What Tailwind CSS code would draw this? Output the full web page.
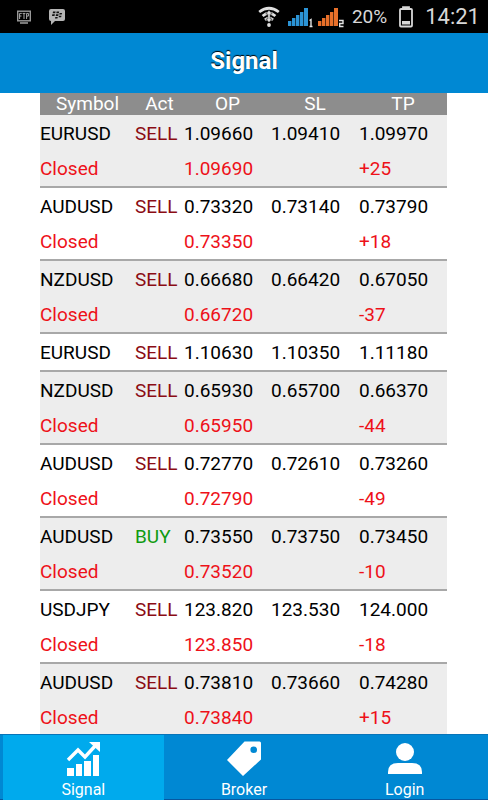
<!DOCTYPE html>
<html lang="en">
<head>
<meta charset="utf-8">
<meta name="viewport" content="width=device-width, initial-scale=1">
<title>Signal</title>
<script src="https://cdn.jsdelivr.net/npm/@tailwindcss/browser@4"></script>
</head>
<body class="flex h-screen flex-col overflow-hidden bg-white font-['Roboto',sans-serif] text-black">

<!-- Device status bar -->
<div class="flex h-[33px] shrink-0 items-center bg-black pr-2 pl-4 text-[#d8d8d8]">
  <svg class="h-[18px] w-4" viewBox="0 0 16 18" aria-hidden="true">
    <rect x="1.7" y="3.2" width="12.6" height="9.6" fill="none" stroke="#999" stroke-width="1.4"/>
    <path d="M4 15h8" stroke="#999" stroke-width="1.6"/>
    <path d="M3.6 11V5.4h2.2M3.6 8h1.9M6.6 5.4h2.8M8 5.4V11M10.6 11V5.4h1.8v2.7h-1.8" fill="none" stroke="#aaa" stroke-width="1"/>
  </svg>
  <svg class="ml-4 h-[18px] w-[18px]" viewBox="0 0 18 18" aria-hidden="true">
    <path d="M3 1h12q2 0 2 2v8q0 2-2 2H7l-4 4v-4q-2 0-2-2V3q0-2 2-2z" fill="#b5b5b5"/>
    <path d="M5 3.500h2.600l-.4 1.700H4.700zM8.600 3.500h2.600l-.4 1.700H8.300zM4.300 6.300h2.600l-.4 1.700H4zM8 6.300h2.600l-.4 1.700H7.700zM11.600 5h2.500l-.4 1.600h-2.500zM11 7.700h2.500l-.4 1.600h-2.500zM7.300 9h2.500l-.4 1.600H7z" fill="#111"/>
  </svg>
  <div class="ml-auto flex items-center">
    <svg class="h-[22px] w-[22px]" viewBox="0 0 22 22" aria-hidden="true">
      <g fill="none" stroke="#e0e0e0" stroke-width="2.8">
        <path d="M1.200 6Q11-1.500 20.800 6"/>
        <path d="M4.600 10Q11 4.500 17.400 10"/>
        <path d="M7 13.800Q11 10.500 15 13.800"/>
      </g>
      <path d="M11 4l3.200 4h-2v5h2L11 16.500 7.800 13h2V8h-2z" fill="#e0e0e0" stroke="#000" stroke-width=".5"/>
      <circle cx="11" cy="19" r="1.900" fill="#e0e0e0"/>
    </svg>
    <svg class="ml-2 h-[22px] w-[26px]" viewBox="0 0 26 22" aria-hidden="true">
      <path d="M0 15h3.400v5H0zM4 12h3.400v8H4zM8 9h3.400v11H8zM12 6h3.400v14H12zM16 2h4v18h-4z" fill="#2b94d6"/>
      <path d="M21.500 14.500l1.500-1v6.500M21.500 20.500h3" fill="none" stroke="#e4e4e4" stroke-width="1.400"/>
    </svg>
    <svg class="ml-1 h-[22px] w-[26px]" viewBox="0 0 26 22" aria-hidden="true">
      <path d="M0 15h3.400v5H0zM4 12h3.400v8H4zM8 9h3.400v11H8zM12 6h3.400v14H12zM16 2h4v18h-4z" fill="#e8702a"/>
      <path d="M21 14.500h4v3h-3.300v3H25.500" fill="none" stroke="#e4e4e4" stroke-width="1.400"/>
    </svg>
    <span class="ml-2 text-[19px] leading-6">20%</span>
    <svg class="ml-3 h-[22px] w-[14px]" viewBox="0 0 14 22" aria-hidden="true">
      <path d="M4 3V1.200h6V3" fill="none" stroke="#d8d8d8" stroke-width="1.800"/>
      <rect x="1" y="3" width="12" height="17.500" rx="1" fill="none" stroke="#d8d8d8" stroke-width="1.800"/>
      <path d="M3 15h8v3.500H3z" fill="#d8d8d8"/>
    </svg>
    <span class="ml-3 text-[22px] leading-7">14:21</span>
  </div>
</div>

<header class="flex h-[60px] shrink-0 items-center justify-center bg-[#0088d3]">
  <h1 class="pb-1 text-2xl font-bold text-white [text-shadow:0_-1px_1px_#000]">Signal</h1>
</header>

<main class="min-h-0 flex-1 overflow-hidden pr-[41px] pl-10">
  <table class="w-full table-fixed border-separate border-spacing-0 text-left text-[19px] leading-[35px]">
    <thead class="bg-[#8d8d8d] text-[19px] leading-[22px] text-white">
      <tr>
        <th scope="col" class="w-[95px] p-0 text-center font-normal">Symbol</th>
        <th scope="col" class="w-[49px] p-0 text-center font-normal">Act</th>
        <th scope="col" class="w-[87px] p-0 text-center font-normal">OP</th>
        <th scope="col" class="p-0 text-center font-normal">SL</th>
        <th scope="col" class="p-0 text-center font-normal">TP</th>
      </tr>
    </thead>
  </table>
</main>

<nav class="grid h-[66px] shrink-0 grid-cols-3 border-t border-b border-t-[#0874b8] border-b-[#0757a0] bg-[#0088d3] px-[3px] text-base leading-5 text-white">
  <a href="#signal" aria-current="page" class="flex flex-col items-center gap-[3px] bg-[#00aaed] pt-[6px]">
    <svg class="h-9 w-9 shrink-0" viewBox="0 0 36 36" fill="#fff" aria-hidden="true">
      <path d="M2 27h7v8H2zM11 23h6v12h-6zM19 20h7v15h-7zM28 14h6v21h-6z"/>
      <path d="M3 19l10-10 7 7L30 5" fill="none" stroke="#fff" stroke-width="3.400"/>
      <path d="M24 1h11v10z"/>
    </svg>
    <span>Signal</span>
  </a>
  <a href="#broker" class="flex flex-col items-center gap-[3px] pt-[6px]">
    <svg class="h-9 w-9 shrink-0" viewBox="0 0 36 36" aria-hidden="true">
      <path fill="#fff" fill-rule="evenodd" d="M18.500 0.500H33.500Q35 0.500 35 2v16.500L17 35 1 19zM27.700 5.400a3.300 3.300 0 1 0 0 6.600 3.300 3.300 0 0 0 0-6.600z"/>
    </svg>
    <span>Broker</span>
  </a>
  <a href="#login" class="flex flex-col items-center gap-[3px] pt-[6px]">
    <svg class="h-9 w-9 shrink-0" viewBox="0 0 36 36" fill="#fff" aria-hidden="true">
      <circle cx="18" cy="11" r="9"/>
      <path d="M1 33v-2q0-9 10-9h14q10 0 10 9v2z"/>
    </svg>
    <span>Login</span>
  </a>
</nav>

<script>
const signals = [
  ["EURUSD", "SELL", "1.09660", "1.09410", "1.09970", "1.09690", "+25"],
  ["AUDUSD", "SELL", "0.73320", "0.73140", "0.73790", "0.73350", "+18"],
  ["NZDUSD", "SELL", "0.66680", "0.66420", "0.67050", "0.66720", "-37"],
  ["EURUSD", "SELL", "1.10630", "1.10350", "1.11180"],
  ["NZDUSD", "SELL", "0.65930", "0.65700", "0.66370", "0.65950", "-44"],
  ["AUDUSD", "SELL", "0.72770", "0.72610", "0.73260", "0.72790", "-49"],
  ["AUDUSD", "BUY", "0.73550", "0.73750", "0.73450", "0.73520", "-10"],
  ["USDJPY", "SELL", "123.820", "123.530", "124.000", "123.850", "-18"],
  ["AUDUSD", "SELL", "0.73810", "0.73660", "0.74280", "0.73840", "+15"],
];
const line = "border-b-2 border-[#a8a8a8]";
const table = document.querySelector("table");
signals.forEach(([symbol, act, op, sl, tp, closed, pips], i) => {
  const body = document.createElement("tbody");
  body.className = i % 2 === 0 ? "bg-[#ededed]" : "bg-white";
  // A signal that is still open has no second row, so its first row carries the rule.
  const cell = "p-0 pt-px " + (closed ? "" : line);
  const last = "p-0 " + line;
  const tone = act === "BUY" ? "text-[#109a10]" : "text-[#8b0c14]";
  body.innerHTML = `<tr><td class="${cell}">${symbol}</td><td class="${cell} ${tone}">${act}</td><td class="${cell}">${op}</td><td class="${cell}">${sl}</td><td class="${cell}">${tp}</td></tr>` +
    (closed ? `<tr class="text-[#ee1119]"><td class="${last}">Closed</td><td class="${last}"></td><td class="${last}">${closed}</td><td class="${last}"></td><td class="${last}">${pips}</td></tr>` : "");
  table.append(body);
});
</script>
</body>
</html>
